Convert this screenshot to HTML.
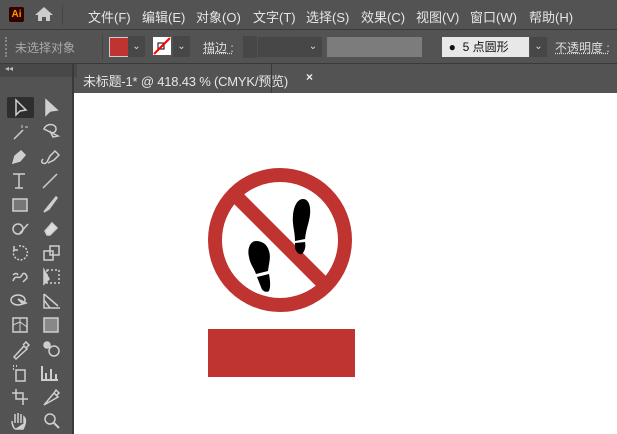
<html><head><style>
body{margin:0;width:617px;height:434px;background:#535353;font-family:"Liberation Sans","Noto Sans CJK SC",sans-serif;overflow:hidden;position:relative;color:#ddd}
.a{position:absolute}
.menu span{position:absolute;top:7px;font-size:13px;color:#e6e6e6}
.tb{font-size:12px}
</style></head><body>
<div class="a" style="left:0;top:0;width:617px;height:29px;background:#535353"></div>
<div class="a" style="left:9px;top:7px;width:15px;height:15px;background:#330000;border-radius:2px;color:#ff9a00;font-size:10px;font-weight:bold;line-height:15px;text-align:center">Ai</div>
<svg class="a" style="left:34px;top:6px" width="20" height="16"><path d="M10 1 L19 9 H16 V15 H12 V11 H8 V15 H4 V9 H1 Z" fill="#ccc"/></svg>
<div class="a" style="left:62px;top:5px;width:1px;height:20px;background:#444"></div>
<div class="menu">
<span style="left:88px">文件(F)</span><span style="left:142px">编辑(E)</span><span style="left:196px">对象(O)</span><span style="left:253px">文字(T)</span><span style="left:306px">选择(S)</span><span style="left:361px">效果(C)</span><span style="left:416px">视图(V)</span><span style="left:470px">窗口(W)</span><span style="left:529px">帮助(H)</span></div>
<div class="a" style="left:0;top:29px;width:617px;height:1px;background:#3a3a3a"></div>
<div class="a" style="left:5px;top:37px;width:2px;height:20px;border-left:2px dotted #888"></div>
<div class="a tb" style="left:15px;top:39px;color:#aaa">未选择对象</div>
<div class="a" style="left:102px;top:35px;width:1px;height:25px;background:#444"></div>
<div class="a" style="left:109px;top:37px;width:18px;height:18px;background:#bf3330;border:1px solid #ccc"></div>
<div class="a" style="left:128px;top:36px;width:17px;height:21px;background:#474747;color:#ddd;font-size:10px;text-align:center;line-height:21px">⌄</div>
<div class="a" style="left:153px;top:37px;width:18px;height:18px;background:#fff"><svg width="18" height="18"><rect x="5" y="6" width="6" height="6" fill="none" stroke="#000"/><line x1="1" y1="17" x2="17" y2="1" stroke="red" stroke-width="2"/></svg></div>
<div class="a" style="left:173px;top:36px;width:17px;height:21px;background:#474747;color:#ddd;font-size:10px;text-align:center;line-height:21px">⌄</div>
<div class="a tb" style="left:203px;top:39px;color:#ddd;text-decoration:underline dotted">描边 :</div>
<div class="a" style="left:243px;top:36px;width:14px;height:22px;background:#474747"></div>
<div class="a" style="left:258px;top:37px;width:46px;height:20px;background:#474747"></div>
<div class="a" style="left:304px;top:37px;width:18px;height:20px;background:#474747;color:#ddd;font-size:10px;text-align:center;line-height:20px">⌄</div>
<div class="a" style="left:327px;top:37px;width:95px;height:20px;background:#7c7c7c"></div>
<div class="a" style="left:442px;top:37px;width:87px;height:20px;background:#e8e8e8;color:#111;font-size:12px;line-height:20px">&nbsp;&nbsp;●&nbsp;&nbsp;5 点圆形</div>
<div class="a" style="left:530px;top:37px;width:17px;height:20px;background:#474747;color:#ddd;font-size:10px;text-align:center;line-height:20px">⌄</div>
<div class="a tb" style="left:555px;top:39px;color:#ddd;text-decoration:underline dotted">不透明度 :</div>
<div class="a" style="left:0;top:63px;width:617px;height:1px;background:#3a3a3a"></div>
<div class="a" style="left:0;top:64px;width:72px;height:13px;background:#484848;font-size:8px;color:#bbb;padding-left:5px">◂◂</div>
<div class="a" style="left:72px;top:64px;width:2px;height:370px;background:#3a3a3a"></div>
<div class="a" style="left:74px;top:64px;width:197px;height:29px;border-right:1px solid #3a3a3a"></div>
<div class="a" style="left:83px;top:71px;font-size:13px;color:#e6e6e6;letter-spacing:-0.2px">未标题-1* @ 418.43 % (CMYK/预览)</div>
<div class="a" style="left:306px;top:70px;font-size:12px;color:#eee;font-weight:bold">×</div>
<div class="a" style="left:74px;top:93px;width:543px;height:341px;background:#fff"></div>
<div class="a" style="left:7px;top:97px;width:27px;height:21px;background:#2e2e2e;border-radius:2px"></div>
<svg class="a" style="left:0;top:0" width="72" height="434" fill="none" stroke="#cfcfcf" stroke-width="1.5">
<g transform="translate(10,99)"><path d="M6 1 V16 L10 12 L16 11 Z"/><path d="M36 1 V16 L40 12 L47 11 Z" fill="#cfcfcf"/></g>
<g transform="translate(10,123)"><line x1="4" y1="16" x2="13" y2="7"/><path d="M12 2 v3 M15 4 h3" stroke-width="1"/><path d="M34 6 c2-6 12-6 12 0 c0 4-6 5-6 2 l3 6 l5-1 z"/></g>
<g transform="translate(10,147)"><path d="M3 16 l2-7 l6-5 l4 4 l-5 6 z" fill="#cfcfcf"/><path d="M33 12 c-4 4 2 6 4 3 l3-6 l5-5 l4 4 l-5 5 l-6 3"/></g>
<g transform="translate(10,171)"><path d="M3 3 h12 M9 3 v14 M5 17 h8"/><line x1="33" y1="17" x2="47" y2="3"/></g>
<g transform="translate(10,195)"><rect x="3" y="4" width="14" height="12" fill="#777"/><path d="M34 17 l3-4 l9-11 l1 1 l-8 11 z" fill="#cfcfcf"/></g>
<g transform="translate(10,219)"><circle cx="8" cy="10" r="5"/><path d="M10 14 l8-9"/><path d="M35 12 l7-8 l5 5 l-7 7 h-3 z" fill="#ddd"/></g>
<g transform="translate(10,243)"><path d="M4 7 a7 7 0 1 0 5-4" stroke-dasharray="2 1.5"/><path d="M4 3 v4 h4"/><rect x="34" y="8" width="9" height="9"/><rect x="40" y="3" width="9" height="9"/></g>
<g transform="translate(10,267)"><path d="M3 14 c3-8 6 0 9-6 c2-4 5 0 5 3 l-4 4 M3 8 c2-2 4-2 5 0"/><path d="M34 3 v14 l5-5 z" fill="#ccc"/><rect x="37" y="3" width="12" height="13" stroke-dasharray="2 2"/></g>
<g transform="translate(10,291)"><ellipse cx="8" cy="9" rx="7" ry="5"/><path d="M8 8 l8 4 l-3 1 z" fill="#ccc"/><path d="M34 3 v14 h16 M34 3 l14 12 M34 9 l6 8"/></g>
<g transform="translate(10,315)"><rect x="3" y="3" width="14" height="14"/><path d="M3 10 l7 -3 l7 5 M10 3 v14" stroke-width="1"/><rect x="34" y="3" width="14" height="14" fill="#888"/></g>
<g transform="translate(10,339)"><path d="M4 18 l10-11 l3 3 l-11 10 z M13 6 l3-3 l3 3 l-3 3"/><circle cx="37" cy="6" r="3" fill="#ccc"/><circle cx="44" cy="12" r="5"/></g>
<g transform="translate(10,363)"><rect x="6" y="7" width="9" height="11"/><path d="M3 3 h1 M6 3 h1 M3 6 h1" stroke-width="2"/><path d="M32 3 v14 h16 M36 17 v-7 M41 17 v-11 M46 17 v-6" stroke-width="2"/></g>
<g transform="translate(10,387)"><path d="M6 2 v10 h12 M2 6 h11 v12 M6 12 h7" /><path d="M34 18 l10-12 l4 4 z M44 6 l2-3 l3 3 l-2 2"/></g>
<g transform="translate(10,411)"><path d="M5 18 c-3-3-3-6-3-8 M5 12 v-9 M8 12 v-10 M11 12 v-9 M14 12 v-6 c2 2 2 6 -1 12 h-8" fill="#cfcfcf"/><circle cx="40" cy="8" r="5"/><line x1="44" y1="12" x2="49" y2="17" stroke-width="2"/></g>
</svg>
<svg class="a" style="left:0;top:0" width="617" height="434">
<circle cx="280" cy="240" r="65" fill="none" stroke="#bf3330" stroke-width="14"/>
<line x1="234" y1="194" x2="326" y2="286" stroke="#bf3330" stroke-width="14"/>
<path d="M303 199 c6 0 8 8 7 16 c-1 8-4 14-5 24 l-10 2 c0-10-3-16-2-26 c1-10 5-16 10-16 z" fill="#000"/>
<path d="M295 243 l10-1 c1 4 0 9-3 12 c-3 1-6-2-7-6 z" fill="#000"/>
<path d="M256 241 c-6 0-9 8-7 16 c1 7 5 11 7 17 l12-3 c1-8 3-14 1-20 c-2-7-7-10-13-10 z" fill="#000"/>
<path d="M257 277 l12-3 c1 6 2 12 0 17 c-3 2-7 0-8-4 z" fill="#000"/>
<rect x="208" y="329" width="147" height="48" fill="#bf3330"/>
</svg>
</body></html>
